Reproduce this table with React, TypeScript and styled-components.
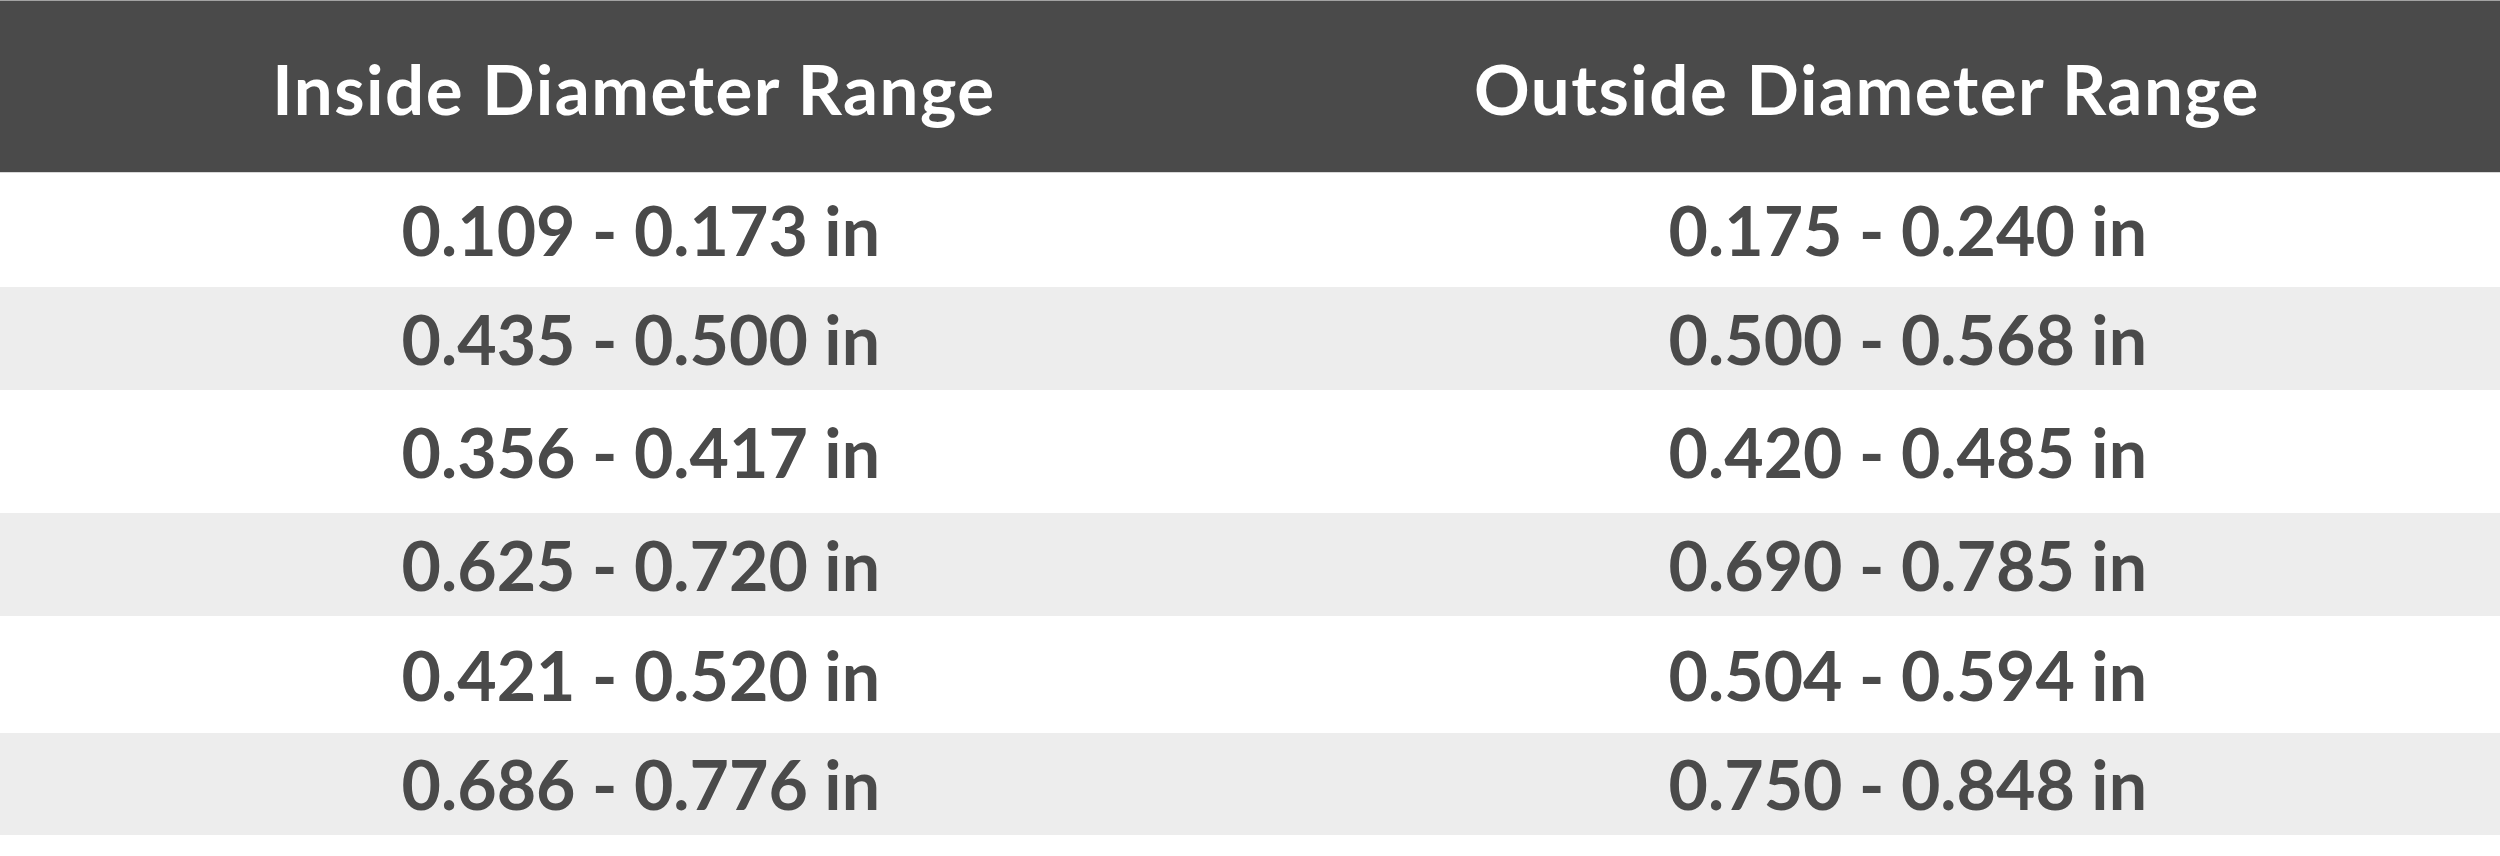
import React from "react";
import styled, { createGlobalStyle } from "styled-components";

const GlobalStyle = createGlobalStyle`
  html, body {
    margin: 0;
    padding: 0;
    background: #ffffff;
  }
  body {
    font-family: "Lato", "Open Sans", "Liberation Sans", sans-serif;
  }
`;

const Table = styled.div`
  width: 2500px;
  height: 856px;
  display: flex;
  flex-direction: column;
  background: #ffffff;
`;

const HeaderRow = styled.div`
  height: 173px;
  box-sizing: border-box;
  display: grid;
  grid-template-columns: 1250px 1250px;
  align-items: center;
  background: #4a4a4a;
  border-top: 1px solid #a3a3a3;
  border-bottom: 1px solid #d8d8d8;
`;

const HeaderCell = styled.div<{ $padLeft: number; $padRight: number }>`
  text-align: center;
  color: #ffffff;
  font-family: "Lato", "Open Sans", "Liberation Sans", sans-serif;
  font-weight: 700;
  font-size: 69px;
  letter-spacing: 1.5px;
  line-height: 1;
  padding-left: ${(p) => p.$padLeft}px;
  padding-right: ${(p) => p.$padRight}px;
  padding-top: 4px;
`;

const Row = styled.div<{ $shade: boolean; $h: number }>`
  height: ${(p) => p.$h}px;
  display: grid;
  grid-template-columns: 1250px 1250px;
  align-items: center;
  background: ${(p) => (p.$shade ? "#ededed" : "#ffffff")};
`;

const Cell = styled.div<{ $padRight: number }>`
  text-align: right;
  color: #4a4a4a;
  font-family: "Lato", "Open Sans", "Liberation Sans", sans-serif;
  font-weight: 700;
  font-size: 68px;
  line-height: 1;
  padding-right: ${(p) => p.$padRight}px;
`;

const rows: { inside: string; outside: string; h: number }[] = [
  { inside: "0.109 - 0.173 in", outside: "0.175 - 0.240 in", h: 114 },
  { inside: "0.435 - 0.500 in", outside: "0.500 - 0.568 in", h: 103 },
  { inside: "0.356 - 0.417 in", outside: "0.420 - 0.485 in", h: 123 },
  { inside: "0.625 - 0.720 in", outside: "0.690 - 0.785 in", h: 103 },
  { inside: "0.421 - 0.520 in", outside: "0.504 - 0.594 in", h: 117 },
  { inside: "0.686 - 0.776 in", outside: "0.750 - 0.848 in", h: 102 },
];

export default function App() {
  return (
    <>
      <GlobalStyle />
      <Table>
        <HeaderRow>
          <HeaderCell $padLeft={18} $padRight={0}>
            Inside Diameter Range
          </HeaderCell>
          <HeaderCell $padLeft={0} $padRight={16}>
            Outside Diameter Range
          </HeaderCell>
        </HeaderRow>
        {rows.map((r, i) => (
          <Row key={i} $shade={i % 2 === 1} $h={r.h}>
            <Cell $padRight={370}>{r.inside}</Cell>
            <Cell $padRight={353}>{r.outside}</Cell>
          </Row>
        ))}
      </Table>
    </>
  );
}
